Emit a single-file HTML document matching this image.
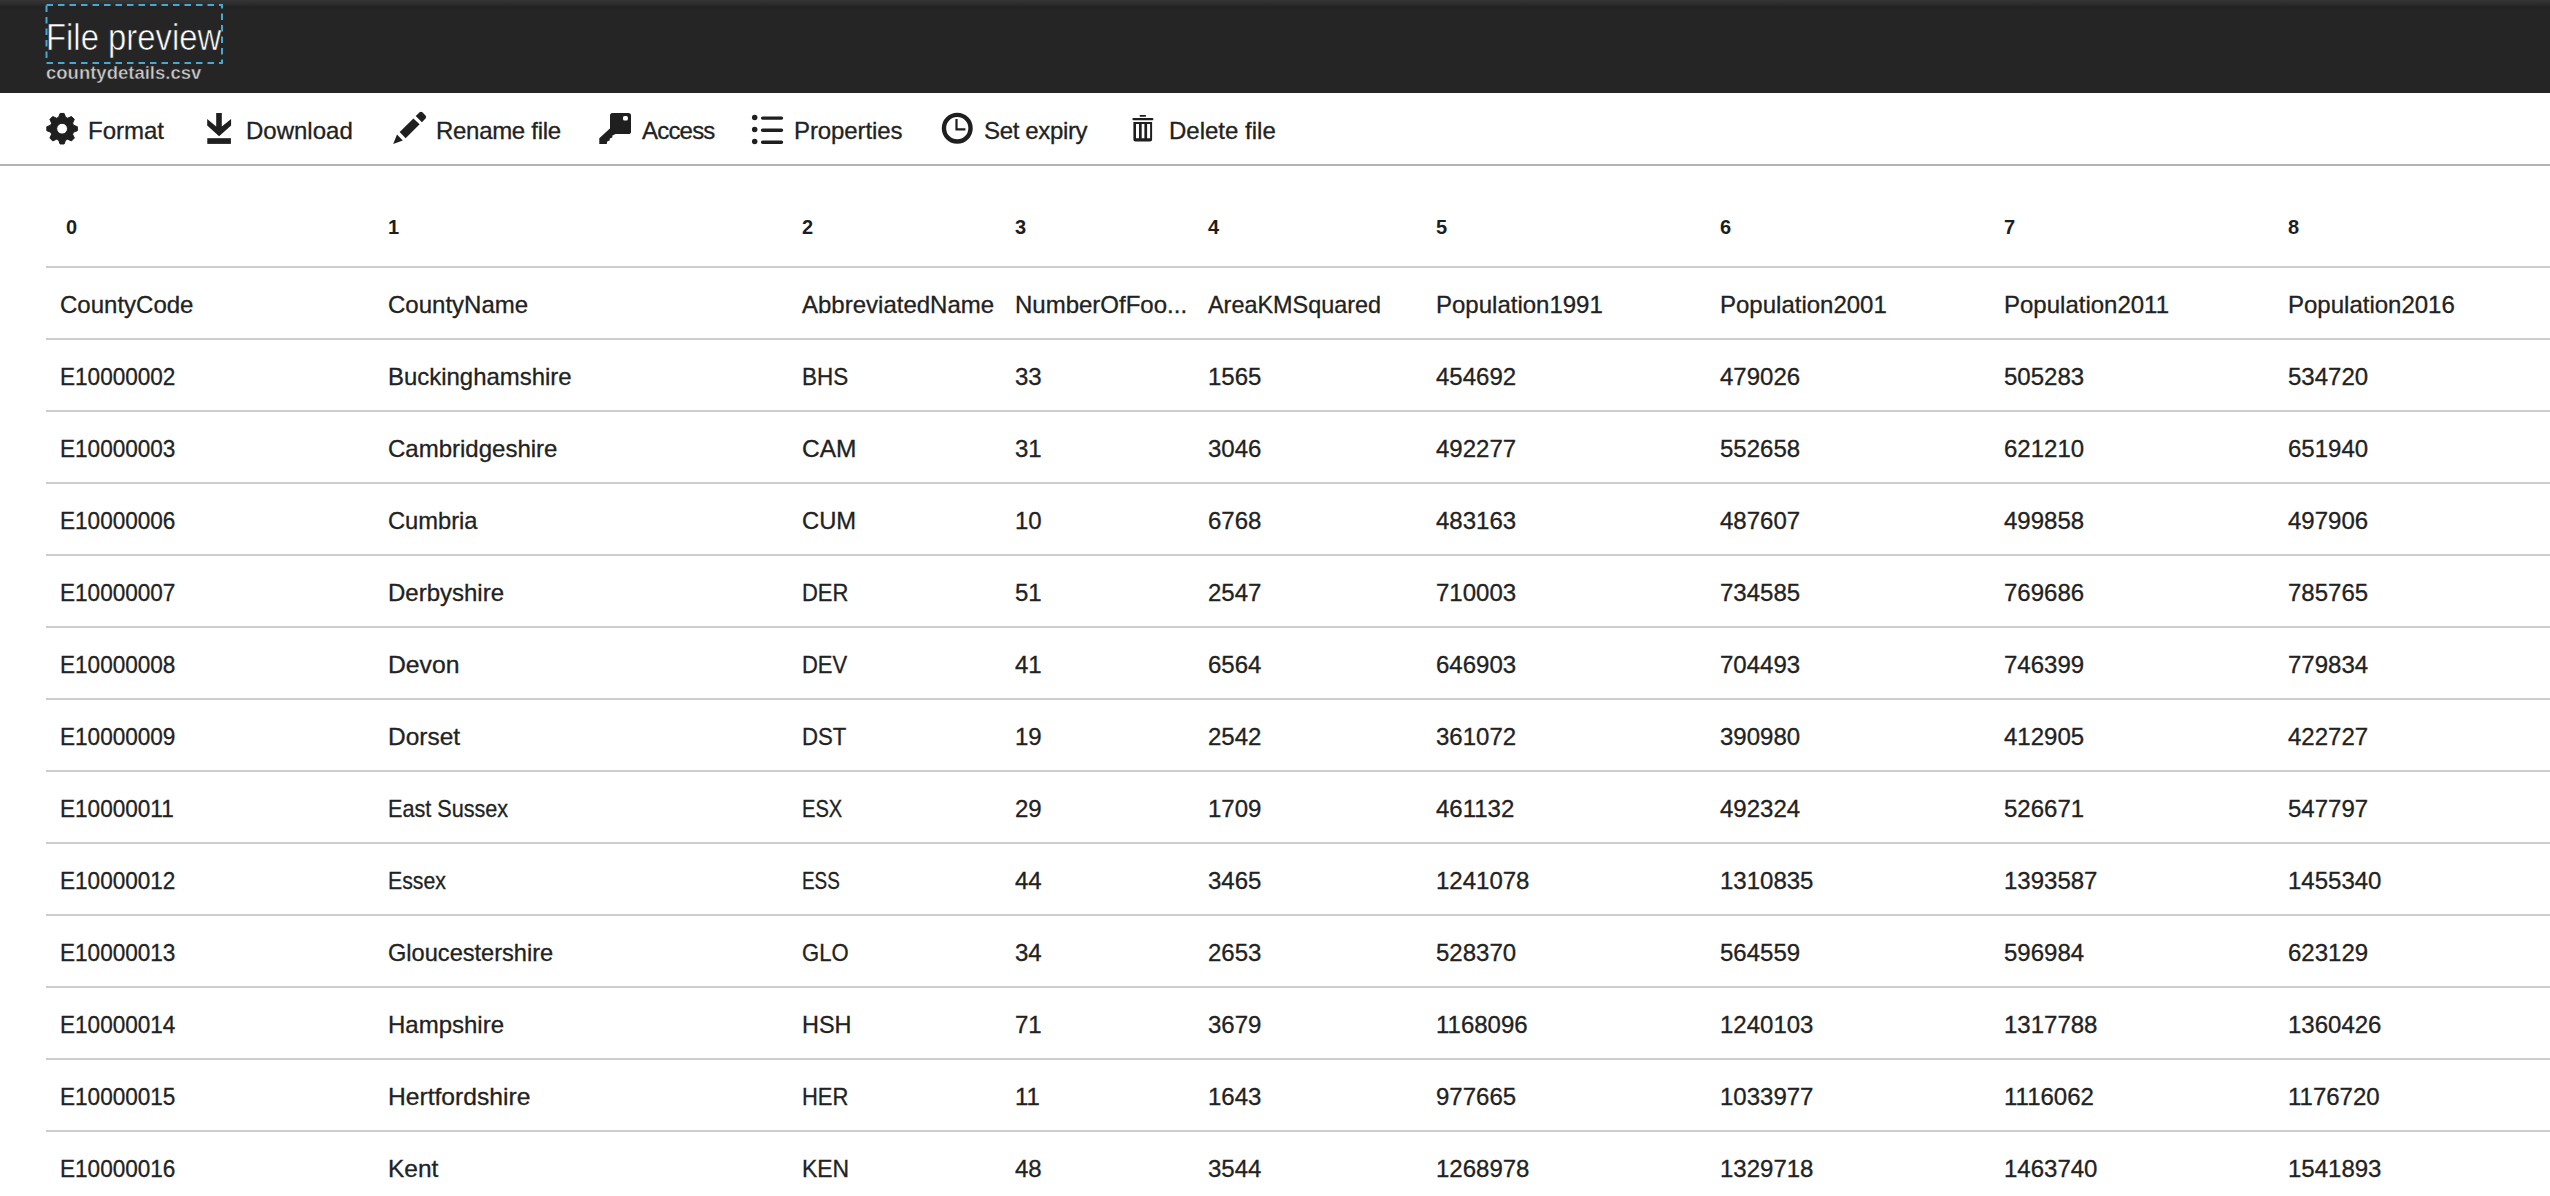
<!DOCTYPE html>
<html><head><meta charset="utf-8">
<style>
html,body{margin:0;padding:0;}
body{width:2550px;height:1196px;overflow:hidden;position:relative;background:#fff;font-family:"Liberation Sans",sans-serif;color:#222;}
.hdr{position:absolute;left:0;top:0;width:2550px;height:93px;background:linear-gradient(#353535 0px,#2f2f2f 3px,#222 7px,#252525 10px,#252525 100%);}
.title{position:absolute;left:46px;top:16px;font-size:36px;line-height:44px;color:#fff;white-space:nowrap;transform-origin:0 0;transform:scaleX(0.912);-webkit-text-stroke:0.6px #252525;}
.sub{position:absolute;left:46px;top:62px;font-size:18.5px;line-height:22px;font-weight:bold;color:#cacaca;white-space:nowrap;-webkit-text-stroke:0.4px #252525;}
.tb{position:absolute;top:117px;font-size:24px;-webkit-text-stroke:0.3px #222;line-height:28px;white-space:nowrap;color:#222;}
.tbline{position:absolute;left:0;top:164px;width:2550px;height:2px;background:#b3b3b3;}
.hd{position:absolute;top:215px;font-size:20px;line-height:24px;font-weight:bold;color:#1e1e1e;}
.ln{position:absolute;left:46px;width:2504px;height:2px;background:#cdcdcd;}
.row{position:absolute;left:0;width:2550px;height:70px;}
.row span{position:absolute;top:2px;transform-origin:0 50%;-webkit-text-stroke:0.3px #222;line-height:70px;font-size:24px;white-space:nowrap;color:#222;}
svg{position:absolute;}
</style></head><body>
<div class="hdr"></div>
<svg style="left:0;top:0" width="240" height="80"><rect x="46.5" y="5" width="175.5" height="58" fill="none" stroke="#46a9d4" stroke-width="2" stroke-dasharray="6.5 5"/></svg>
<div class="title">File preview</div>
<div class="sub">countydetails.csv</div>
<svg style="left:0;top:100px" width="1300" height="60" viewBox="0 100 1300 60">
<path d="M58.62,117.32 L60.09,113.43 L64.11,113.43 L65.58,117.32 L67.69,118.19 L71.47,116.48 L74.32,119.33 L72.61,123.11 L73.48,125.22 L77.37,126.69 L77.37,130.71 L73.48,132.18 L72.61,134.29 L74.32,138.07 L71.47,140.92 L67.69,139.21 L65.58,140.08 L64.11,143.97 L60.09,143.97 L58.62,140.08 L56.51,139.21 L52.73,140.92 L49.88,138.07 L51.59,134.29 L50.72,132.18 L46.83,130.71 L46.83,126.69 L50.72,125.22 L51.59,123.11 L49.88,119.33 L52.73,116.48 L56.51,118.19Z M67.50,128.70 A5.4,5.4 0 1,0 56.70,128.70 A5.4,5.4 0 1,0 67.50,128.70Z" fill="#1f1f1f" fill-rule="evenodd" stroke="#1f1f1f" stroke-width="1.0" stroke-linejoin="round"/>
<path d="M207.2,119 L216.2,126.6 L216.2,113 L221.8,113 L221.8,126.6 L231.1,119 L231.1,125.6 L219.1,136.2 L207.2,125.6Z" fill="#1f1f1f"/>
<rect x="207.3" y="138.2" width="23.6" height="5.7" fill="#1f1f1f"/>
<path d="M393.2,144 L397,134.6 L402.8,140.4Z" fill="#1f1f1f"/>
<path d="M399.7,132.1 L413.4,118.4 L419.6,124.2 L405.6,138.2Z" fill="#1f1f1f"/>
<path d="M415.7,116.1 L419.4,112.5 Q421.0,111.1 422.6,112.5 L425.5,115.4 Q426.9,117.0 425.5,118.6 L421.9,122.2Z" fill="#1f1f1f"/>
<rect x="610" y="113" width="21" height="21" rx="2.6" fill="#1f1f1f"/>
<path d="M611.5,127 L599.3,138.2 L599.3,144 L606.8,144 L607.2,141.6 L609.6,140.6 L609.8,138.6 L612.3,137.4 L612.4,135.6 L615.2,134.3 L616,133Z" fill="#1f1f1f"/>
<rect x="623" y="116" width="4.9" height="4.5" rx="1.6" fill="#fff"/>
<circle cx="754.7" cy="117.5" r="2.75" fill="#1f1f1f"/>
<circle cx="754.7" cy="129.4" r="2.75" fill="#1f1f1f"/>
<circle cx="754.7" cy="141.4" r="2.75" fill="#1f1f1f"/>
<path d="M762.6,118.1 H781.5 M762.6,130.2 H781.5 M762.6,142.2 H781.5" stroke="#1f1f1f" stroke-width="3.4" stroke-linecap="round"/>
<circle cx="957.25" cy="128.2" r="13.3" fill="none" stroke="#1f1f1f" stroke-width="4.4"/>
<path d="M956.5,118.9 V129.4 H965.4" fill="none" stroke="#1f1f1f" stroke-width="2.2"/>
<rect x="1139.6" y="115" width="6.4" height="1.7" rx="0.6" fill="#1f1f1f"/>
<rect x="1132.4" y="117.9" width="21" height="2.4" rx="1.1" fill="#1f1f1f"/>
<path d="M1133.4,122 H1152.1 V139.4 Q1152.1,141.4 1150.1,141.4 H1135.4 Q1133.4,141.4 1133.4,139.4Z M1136,124 V138.2 H1139 V124Z M1141.7,124 V138.2 H1144.4 V124Z M1147.1,124 V138.2 H1150.1 V124Z" fill="#1f1f1f" fill-rule="evenodd"/>
</svg>
<div class="tb" style="left:88px">Format</div>
<div class="tb" style="left:246px">Download</div>
<div class="tb" style="left:436px;letter-spacing:-0.3px">Rename file</div>
<div class="tb" style="left:642px;letter-spacing:-0.8px">Access</div>
<div class="tb" style="left:794px;letter-spacing:-0.1px">Properties</div>
<div class="tb" style="left:984px;letter-spacing:-0.35px">Set expiry</div>
<div class="tb" style="left:1169px">Delete file</div>
<div class="tbline"></div>
<div class="hd" style="left:66px">0</div>
<div class="hd" style="left:388px">1</div>
<div class="hd" style="left:802px">2</div>
<div class="hd" style="left:1015px">3</div>
<div class="hd" style="left:1208px">4</div>
<div class="hd" style="left:1436px">5</div>
<div class="hd" style="left:1720px">6</div>
<div class="hd" style="left:2004px">7</div>
<div class="hd" style="left:2288px">8</div>
<div class="ln" style="top:266px"></div>
<div class="ln" style="top:338px"></div>
<div class="ln" style="top:410px"></div>
<div class="ln" style="top:482px"></div>
<div class="ln" style="top:554px"></div>
<div class="ln" style="top:626px"></div>
<div class="ln" style="top:698px"></div>
<div class="ln" style="top:770px"></div>
<div class="ln" style="top:842px"></div>
<div class="ln" style="top:914px"></div>
<div class="ln" style="top:986px"></div>
<div class="ln" style="top:1058px"></div>
<div class="ln" style="top:1130px"></div>
<div class="row" style="top:268px"><span style="left:60px">CountyCode</span><span style="left:388px">CountyName</span><span style="left:802px">AbbreviatedName</span><span style="left:1015px">NumberOfFoo...</span><span style="left:1208px;transform:scaleX(0.975)">AreaKMSquared</span><span style="left:1436px">Population1991</span><span style="left:1720px">Population2001</span><span style="left:2004px">Population2011</span><span style="left:2288px">Population2016</span></div>
<div class="row" style="top:340px"><span style="left:60px;transform:scaleX(0.94)">E10000002</span><span style="left:388px;transform:scaleX(0.997)">Buckinghamshire</span><span style="left:802px;transform:scaleX(0.935)">BHS</span><span style="left:1015px">33</span><span style="left:1208px">1565</span><span style="left:1436px">454692</span><span style="left:1720px">479026</span><span style="left:2004px">505283</span><span style="left:2288px">534720</span></div>
<div class="row" style="top:412px"><span style="left:60px;transform:scaleX(0.94)">E10000003</span><span style="left:388px;transform:scaleX(1)">Cambridgeshire</span><span style="left:802px;transform:scaleX(1.02)">CAM</span><span style="left:1015px">31</span><span style="left:1208px">3046</span><span style="left:1436px">492277</span><span style="left:1720px">552658</span><span style="left:2004px">621210</span><span style="left:2288px">651940</span></div>
<div class="row" style="top:484px"><span style="left:60px;transform:scaleX(0.94)">E10000006</span><span style="left:388px;transform:scaleX(0.987)">Cumbria</span><span style="left:802px;transform:scaleX(0.99)">CUM</span><span style="left:1015px">10</span><span style="left:1208px">6768</span><span style="left:1436px">483163</span><span style="left:1720px">487607</span><span style="left:2004px">499858</span><span style="left:2288px">497906</span></div>
<div class="row" style="top:556px"><span style="left:60px;transform:scaleX(0.94)">E10000007</span><span style="left:388px;transform:scaleX(1)">Derbyshire</span><span style="left:802px;transform:scaleX(0.915)">DER</span><span style="left:1015px">51</span><span style="left:1208px">2547</span><span style="left:1436px">710003</span><span style="left:1720px">734585</span><span style="left:2004px">769686</span><span style="left:2288px">785765</span></div>
<div class="row" style="top:628px"><span style="left:60px;transform:scaleX(0.94)">E10000008</span><span style="left:388px;transform:scaleX(1.03)">Devon</span><span style="left:802px;transform:scaleX(0.915)">DEV</span><span style="left:1015px">41</span><span style="left:1208px">6564</span><span style="left:1436px">646903</span><span style="left:1720px">704493</span><span style="left:2004px">746399</span><span style="left:2288px">779834</span></div>
<div class="row" style="top:700px"><span style="left:60px;transform:scaleX(0.94)">E10000009</span><span style="left:388px;transform:scaleX(1.02)">Dorset</span><span style="left:802px;transform:scaleX(0.924)">DST</span><span style="left:1015px">19</span><span style="left:1208px">2542</span><span style="left:1436px">361072</span><span style="left:1720px">390980</span><span style="left:2004px">412905</span><span style="left:2288px">422727</span></div>
<div class="row" style="top:772px"><span style="left:60px;transform:scaleX(0.94)">E10000011</span><span style="left:388px;transform:scaleX(0.9)">East Sussex</span><span style="left:802px;transform:scaleX(0.838)">ESX</span><span style="left:1015px">29</span><span style="left:1208px">1709</span><span style="left:1436px">461132</span><span style="left:1720px">492324</span><span style="left:2004px">526671</span><span style="left:2288px">547797</span></div>
<div class="row" style="top:844px"><span style="left:60px;transform:scaleX(0.94)">E10000012</span><span style="left:388px;transform:scaleX(0.887)">Essex</span><span style="left:802px;transform:scaleX(0.787)">ESS</span><span style="left:1015px">44</span><span style="left:1208px">3465</span><span style="left:1436px">1241078</span><span style="left:1720px">1310835</span><span style="left:2004px">1393587</span><span style="left:2288px">1455340</span></div>
<div class="row" style="top:916px"><span style="left:60px;transform:scaleX(0.94)">E10000013</span><span style="left:388px;transform:scaleX(0.983)">Gloucestershire</span><span style="left:802px;transform:scaleX(0.918)">GLO</span><span style="left:1015px">34</span><span style="left:1208px">2653</span><span style="left:1436px">528370</span><span style="left:1720px">564559</span><span style="left:2004px">596984</span><span style="left:2288px">623129</span></div>
<div class="row" style="top:988px"><span style="left:60px;transform:scaleX(0.94)">E10000014</span><span style="left:388px;transform:scaleX(1)">Hampshire</span><span style="left:802px;transform:scaleX(0.977)">HSH</span><span style="left:1015px">71</span><span style="left:1208px">3679</span><span style="left:1436px">1168096</span><span style="left:1720px">1240103</span><span style="left:2004px">1317788</span><span style="left:2288px">1360426</span></div>
<div class="row" style="top:1060px"><span style="left:60px;transform:scaleX(0.94)">E10000015</span><span style="left:388px;transform:scaleX(1.026)">Hertfordshire</span><span style="left:802px;transform:scaleX(0.915)">HER</span><span style="left:1015px">11</span><span style="left:1208px">1643</span><span style="left:1436px">977665</span><span style="left:1720px">1033977</span><span style="left:2004px">1116062</span><span style="left:2288px">1176720</span></div>
<div class="row" style="top:1132px"><span style="left:60px;transform:scaleX(0.94)">E10000016</span><span style="left:388px;transform:scaleX(1.02)">Kent</span><span style="left:802px;transform:scaleX(0.955)">KEN</span><span style="left:1015px">48</span><span style="left:1208px">3544</span><span style="left:1436px">1268978</span><span style="left:1720px">1329718</span><span style="left:2004px">1463740</span><span style="left:2288px">1541893</span></div>
</body></html>
